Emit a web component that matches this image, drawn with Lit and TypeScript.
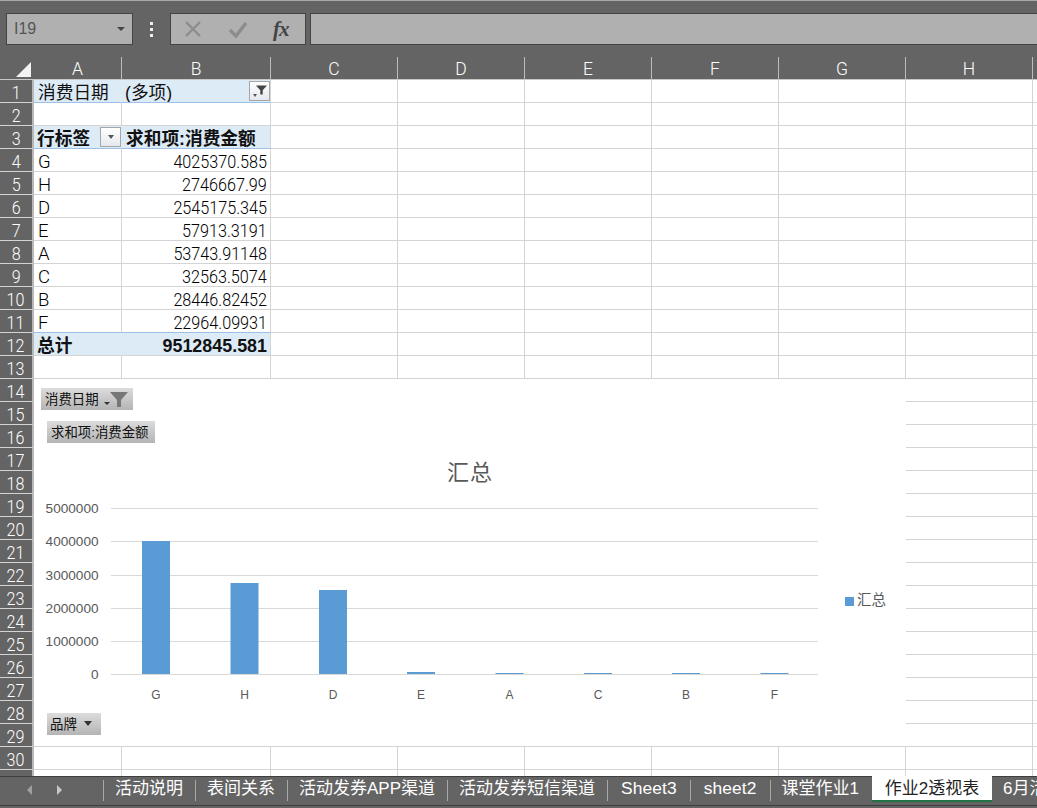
import { LitElement, html, css, svg } from "lit";
import { customElement } from "lit/decorators.js";

const COLS = ["A", "B", "C", "D", "E", "F", "G", "H", "I"];
const DATA: [string, string][] = [
  ["G", "4025370.585"], ["H", "2746667.99"], ["D", "2545175.345"], ["E", "57913.3191"],
  ["A", "53743.91148"], ["C", "32563.5074"], ["B", "28446.82452"], ["F", "22964.09931"],
];
const TABS = ["活动说明", "表间关系", "活动发券APP渠道", "活动发券短信渠道"];
const CATS: [string, number, number][] = [
  ["G", 156, 541], ["H", 244.5, 583], ["D", 333, 590], ["E", 421, 672],
  ["A", 509.5, 673], ["C", 598, 673], ["B", 686, 673], ["F", 774.5, 673],
];

const funnel = html`<svg class="funnel" viewBox="0 0 18 15"><path d="M0 0H18L11 8V15H7V8Z" /></svg>`;

@customElement("app-root")
export class AppRoot extends LitElement {
  static styles = css`
    :host {
      display: flex; flex-direction: column; width: 1037px; height: 808px; overflow: hidden;
      background: #646464; font-family: "Liberation Sans", "Noto Sans CJK SC", sans-serif; color: #111;
    }
    .toolbar { height: 57px; flex: none; box-sizing: border-box; border-top: 1px solid #a8a8a8; display: flex; padding: 12px 0 0 6px; align-items: flex-start; }
    .box { height: 32px; box-sizing: border-box; background: #b0b0b0; border: 1px solid #444; }
    .name { width: 127px; display: flex; align-items: center; justify-content: space-between; padding: 0 7px; color: #555; font-size: 16px; }
    .caret { width: 0; height: 0; border: 4px solid transparent; border-top: 4px solid #444; border-bottom: 0; }
    .dots { width: 37px; display: flex; flex-direction: column; align-items: center; gap: 3px; padding-top: 9px; box-sizing: border-box; height: 32px; }
    .dots i { width: 3px; height: 3px; background: #eee; }
    .fx { width: 136px; display: flex; align-items: center; gap: 25px; padding-left: 12px; }
    .fx svg { width: 20px; height: 20px; flex: none; }
    .fx b { font: italic bold 21px "Liberation Serif", serif; color: #444; letter-spacing: -1px; }
    .input { flex: 1; margin-left: 4px; border-right: 0; }
    .sheet { flex: 1; min-height: 0; position: relative; overflow: hidden; background: #fff; }
    .grid { display: grid; grid-template-columns: 34px 88px 149px repeat(7, 127px); grid-auto-rows: 23px; font-size: 17.7px; }
    .c { box-sizing: border-box; border-right: 1px solid #d4d4d4; border-bottom: 1px solid #d4d4d4; line-height: 26px; padding: 0 3px 0 4px; white-space: nowrap; overflow: hidden; }
    .num { font-family: Roboto, "Liberation Sans", sans-serif; font-weight: 300; font-size: 18.5px; color: #000; }
    .num span { display: inline-block; transform: scaleX(0.875); transform-origin: right center; }
    .key span { transform: none; }
    .corner { background: #646464; border-right: 0; border-bottom: 1px solid #c8c8c8; display: flex; justify-content: flex-end; align-items: flex-end; padding: 0 3px 2px 0; }
    .corner svg { width: 15px; height: 15px; fill: #f2f2f2; display: block; }
    .ch { background: #646464; color: #fff; text-align: center; border-right: 1px solid #bdbdbd; border-bottom: 1px solid #c8c8c8; font-family: Roboto, "Liberation Sans", sans-serif; font-weight: 300; font-size: 17.5px; line-height: 25px; padding: 0; }
    .rh { background: #646464; color: #fff; text-align: center; border-right: 2px solid #b8b8b8; border-bottom: 1px solid #d4d4d4; font-family: Roboto, "Liberation Sans", sans-serif; font-weight: 300; font-size: 19px; line-height: 26px; padding: 0; }
    .rh span { display: inline-block; transform: scaleX(0.85); }
    .pv { background: #ddebf7; border-right-color: #ddebf7; border-bottom-color: #9bc2e6; }
    .pv.b { padding-left: 3px; }
    .pv-end { background: #ddebf7; border-right-color: #d4d4d4; border-bottom-color: #9bc2e6; }
    .total { border-bottom-color: #d4d4d4; }
    .blue-line { border-bottom-color: #9bc2e6; }
    .b { font-weight: 700; }
    .big { font-size: 17.9px; }
    .r { text-align: right; }
    .split { display: flex; justify-content: space-between; align-items: flex-start; padding-right: 0; }
    .split > span { margin-left: -1px; }
    .fbtn { width: 21px; height: 20px; margin-top: 1px; box-sizing: border-box; background: linear-gradient(#fff, #e4e8ee); border: 1px solid #a6a6a6; display: flex; align-items: center; justify-content: center; flex: none; }
    .fbtn .down { width: 0; height: 0; border: 3px solid transparent; border-top: 4px solid #555; border-bottom: 0; }
    .fbtn.filt { align-items: flex-start; padding-top: 3px; }
    .fbtn.filt .down { margin-top: 9px; border-width: 2px; border-top-width: 3px; margin-right: -1px; }
    .fbtn svg.funnel { width: 11px; height: 10px; fill: #444; }
    .chart { position: absolute; left: 34px; top: 322px; width: 872px; height: 367px; background: #fff; }
    .chart > svg { position: absolute; left: 0; top: 0; width: 872px; height: 367px; }
    .fld { position: absolute; height: 22px; box-sizing: border-box; background: linear-gradient(#dcdcdc, #b4b4b4); display: flex; align-items: center; padding: 0 4px 2px; gap: 7px; font-size: 13.4px; color: #111; white-space: nowrap; }
    .fld .down { width: 0; height: 0; border: 4px solid transparent; border-top: 5px solid #333; border-bottom: 0; }
    .fld svg.funnel { width: 18px; height: 15px; fill: #777; margin-left: -7px; margin-top: 2px; }
    .f1 { left: 7px; top: 9px; width: 92px; }
    .f1 .down { border-width: 3px; border-top-width: 3px; margin-top: 10px; margin-left: -2px; }
    .f2 { left: 13px; top: 42px; width: 108px; }
    .f3 { left: 13px; top: 334px; width: 54px; padding-left: 3px; }
    .gl { stroke: #d9d9d9; stroke-width: 1; }
    .bar { fill: #5b9bd5; }
    .ax { font-size: 13.6px; fill: #595959; }
    .leg { font-size: 14.5px; }
    .cat { font-size: 12px; fill: #595959; text-anchor: middle; }
    .title { font-size: 22px; fill: #595959; text-anchor: middle; letter-spacing: 1px; }
    .tabs { height: 29px; flex: none; box-sizing: border-box; border-top: 1px solid #3e3e3e; display: flex; align-items: flex-start; }
    .arrows { width: 103px; flex: none; display: flex; gap: 25px; padding: 8px 0 0 27px; box-sizing: border-box; height: 27px; }
    .arrows i { width: 0; height: 0; border: 5px solid transparent; }
    .arrows .l { border-right: 5px solid #a0a0a0; border-left: 0; }
    .arrows .r2 { border-left: 5px solid #c8c8c8; border-right: 0; }
    .tab { flex: none; height: 21px; margin-top: 3px; border-left: 1px solid #a8a8a8; padding: 0 12px 0 11px; line-height: 17px; color: #fff; font-size: 17px; white-space: nowrap; }
    .lat { font-size: 17.4px; letter-spacing: 0.1px; padding: 0 13px; }
    .tab.noline { border-left: 0; }
    .active { flex: none; width: 120px; height: 26px; margin: -1px 0 0 1px; background: #fff; color: #222; border-bottom: 2px solid #217346; font-size: 17px; text-align: center; line-height: 25px; white-space: nowrap; box-sizing: border-box; }
    .foot { height: 3px; flex: none; background: #646464; border-top: 1px solid #3e3e3e; box-sizing: border-box; }
  `;

  private blanks(n = 7) {
    return Array.from({ length: n }, () => html`<div class="c"></div>`);
  }

  private rowHead(n: number) {
    return html`<div class="c rh"><span>${n}</span></div>`;
  }

  render() {
    const ys = [508, 541, 575, 608, 641, 674];
    const labels = ["5000000", "4000000", "3000000", "2000000", "1000000", "0"];
    return html`
      <div class="toolbar">
        <div class="box name"><span>I19</span><i class="caret"></i></div>
        <div class="dots"><i></i><i></i><i></i></div>
        <div class="box fx">
          <svg viewBox="0 0 20 20"><path d="M3 3L17 17M17 3L3 17" stroke="#8c8c8c" stroke-width="2.4" fill="none" /></svg>
          <svg viewBox="0 0 20 20"><path d="M2 11L8 17L18 4" stroke="#8c8c8c" stroke-width="3.4" fill="none" /></svg>
          <b>fx</b>
        </div>
        <div class="box input"></div>
      </div>
      <div class="sheet">
        <div class="grid">
          <div class="c corner"><svg viewBox="0 0 15 15"><path d="M15 0V15H0Z" /></svg></div>
          ${COLS.map((c) => html`<div class="c ch">${c}</div>`)}

          ${this.rowHead(1)}
          <div class="c pv">消费日期</div>
          <div class="c pv-end split"><span>(多项)</span><div class="fbtn filt"><i class="down"></i>${funnel}</div></div>
          ${this.blanks()}

          ${this.rowHead(2)}
          ${this.blanks(9)}

          ${this.rowHead(3)}
          <div class="c pv b split">行标签<div class="fbtn"><i class="down"></i></div></div>
          <div class="c pv-end b">求和项:消费金额</div>
          ${this.blanks()}

          ${DATA.map(([k, v], i) => html`
            ${this.rowHead(i + 4)}
            <div class="c num key ${i === 7 ? "blue-line" : ""}"><span>${k}</span></div>
            <div class="c r num ${i === 7 ? "blue-line" : ""}"><span>${v}</span></div>
            ${this.blanks()}
          `)}

          ${this.rowHead(12)}
          <div class="c pv b total">总计</div>
          <div class="c pv-end b r total big">9512845.581</div>
          ${this.blanks()}

          ${Array.from({ length: 18 }, (_, i) => html`${this.rowHead(i + 13)}${this.blanks(9)}`)}
          <div class="c rh"></div>
          ${this.blanks(9)}
        </div>

        <div class="chart">
          <svg viewBox="34 379 872 367">
            <text class="title" x="470" y="480">汇总</text>
            ${ys.map((y, i) => svg`
              <line class="gl" x1="111" x2="818" y1=${y + 0.5} y2=${y + 0.5} />
              <text class="ax" x="98.5" y=${y + 5} text-anchor="end">${labels[i]}</text>
            `)}
            ${CATS.map(([k, x, top]) => svg`
              <rect class="bar" x=${x - 14} y=${top} width="28" height=${674 - top} />
              <text class="cat" x=${x} y="699">${k}</text>
            `)}
            <rect class="bar" x="845" y="597" width="9" height="9" />
            <text class="ax leg" x="857" y="605">汇总</text>
          </svg>
          <div class="fld f1">消费日期<i class="down"></i>${funnel}</div>
          <div class="fld f2">求和项:消费金额</div>
          <div class="fld f3">品牌<i class="down"></i></div>
        </div>
      </div>
      <div class="tabs">
        <div class="arrows"><i class="l"></i><i class="r2"></i></div>
        ${TABS.map((t) => html`<div class="tab">${t}</div>`)}
        <div class="tab lat">Sheet3</div>
        <div class="tab lat">sheet2</div>
        <div class="tab">课堂作业1</div>
        <div class="active">作业2透视表</div>
        <div class="tab noline">6月活动</div>
      </div>
      <div class="foot"></div>
    `;
  }
}
